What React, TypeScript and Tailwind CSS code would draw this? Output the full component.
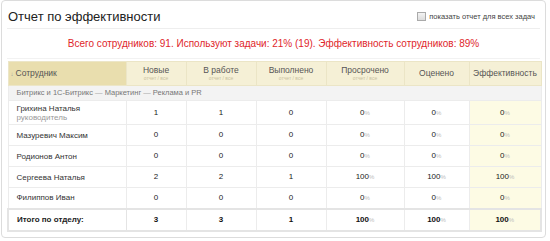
const rows = [
  { name: "Грихина Наталья", role: "руководитель", v: ["1", "1", "0", "0", "0", "0"] },
  { name: "Мазуревич Максим", v: ["0", "0", "0", "0", "0", "0"] },
  { name: "Родионов Антон", v: ["0", "0", "0", "0", "0", "0"] },
  { name: "Сергеева Наталья", v: ["2", "2", "1", "100", "100", "100"] },
  { name: "Филиппов Иван", v: ["0", "0", "0", "0", "0", "0"] },
];

const cols = [
  { title: "Новые", sub: true },
  { title: "В работе", sub: true },
  { title: "Выполнено", sub: true },
  { title: "Просрочено", sub: true },
  { title: "Оценено", sub: false },
  { title: "Эффективность", sub: false },
];

function Cell({ value, i, bold }: { value: string; i: number; bold?: boolean }) {
  const pct = i >= 3;
  return (
    <td
      className={
        "border border-[#ececec] text-center text-[8px] " +
        (i === 5 ? "bg-[#fdfbe4] " : "") +
        (bold ? "font-bold text-[#111]" : "text-[#222]")
      }
    >
      {value}
      {pct && <span className="text-[6px] font-normal text-[#bbb]">%</span>}
    </td>
  );
}

export default function App() {
  return (
    <div className="h-[241px] w-[550px] bg-white font-['Liberation_Sans',Arial,sans-serif]">
      <div className="ml-px h-[238px] w-[545px] rounded-sm border border-[#dcdcdc] px-[5px]">
        <div className="flex h-[28px] items-center justify-between border-b border-[#eeeeee] pl-px pt-[4px]">
          <h1 className="text-[13px] text-[#222]">Отчет по эффективности</h1>
          <label className="mr-[5px] flex items-center gap-[3px] text-[7.5px] text-[#444]">
            <span className="h-[9px] w-[9px] border border-[#aaa] bg-gradient-to-b from-[#f4f4f4] to-[#dcdcdc]" />
            показать отчет для всех задач
          </label>
        </div>
        <div className="flex h-[30px] items-center justify-center border-b border-[#f2f2f2] text-[10px] text-[#e0262b]">
          Всего сотрудников: 91. Используют задачи: 21% (19). Эффективность сотрудников: 89%
        </div>
        <table className="mt-[2px] w-[533px] table-fixed border-collapse">
          <colgroup>
            <col className="w-[118px]" />
            <col className="w-[60px]" />
            <col className="w-[70px]" />
            <col className="w-[70px]" />
            <col className="w-[78px]" />
            <col className="w-[65px]" />
            <col className="w-[72px]" />
          </colgroup>
          <thead>
            <tr className="h-[24px]">
              <th className="border border-[#ece6c8] bg-[#e9deae] pl-[2px] text-left text-[8.5px] font-normal text-[#555]">
                <span className="mr-[2px] text-[6px] text-[#999]">↓</span>Сотрудник
              </th>
              {cols.map((c) => (
                <th
                  key={c.title}
                  className="border border-[#ebe5c6] bg-[#f5f0d6] text-center text-[8.5px] font-normal leading-[9px] text-[#555]"
                >
                  <div>{c.title}</div>
                  {c.sub && <div className="text-[5px] leading-[6px] text-[#c9c1a0]">отчет / все</div>}
                </th>
              ))}
            </tr>
          </thead>
          <tbody>
            <tr className="h-[15px] bg-[#f3f3f3]">
              <td colSpan={7} className="border border-[#ececec] pl-[8px] text-[7.5px] text-[#777]">
                Битрикс и 1С-Битрикс <span className="text-[#aaa]">—</span> Маркетинг{" "}
                <span className="text-[#aaa]">—</span> Реклама и PR
              </td>
            </tr>
            {rows.map((r) => (
              <tr key={r.name} className={r.role ? "h-[24px]" : "h-[21px]"}>
                <td className="border border-[#ececec] pl-[8px] text-[8px] leading-[9px] text-[#333]">
                  <div>{r.name}</div>
                  {r.role && <div className="text-[#999]">{r.role}</div>}
                </td>
                {r.v.map((v, i) => (
                  <Cell key={i} value={v} i={i} />
                ))}
              </tr>
            ))}
            <tr className="h-[22px] border-2 border-[#e4e4e4]">
              <td className="border border-[#e4e4e4] pl-[8px] text-[8px] font-bold text-[#222]">
                Итого по отделу:
              </td>
              {["3", "3", "1", "100", "100", "100"].map((v, i) => (
                <Cell key={i} value={v} i={i} bold />
              ))}
            </tr>
          </tbody>
        </table>
      </div>
    </div>
  );
}
